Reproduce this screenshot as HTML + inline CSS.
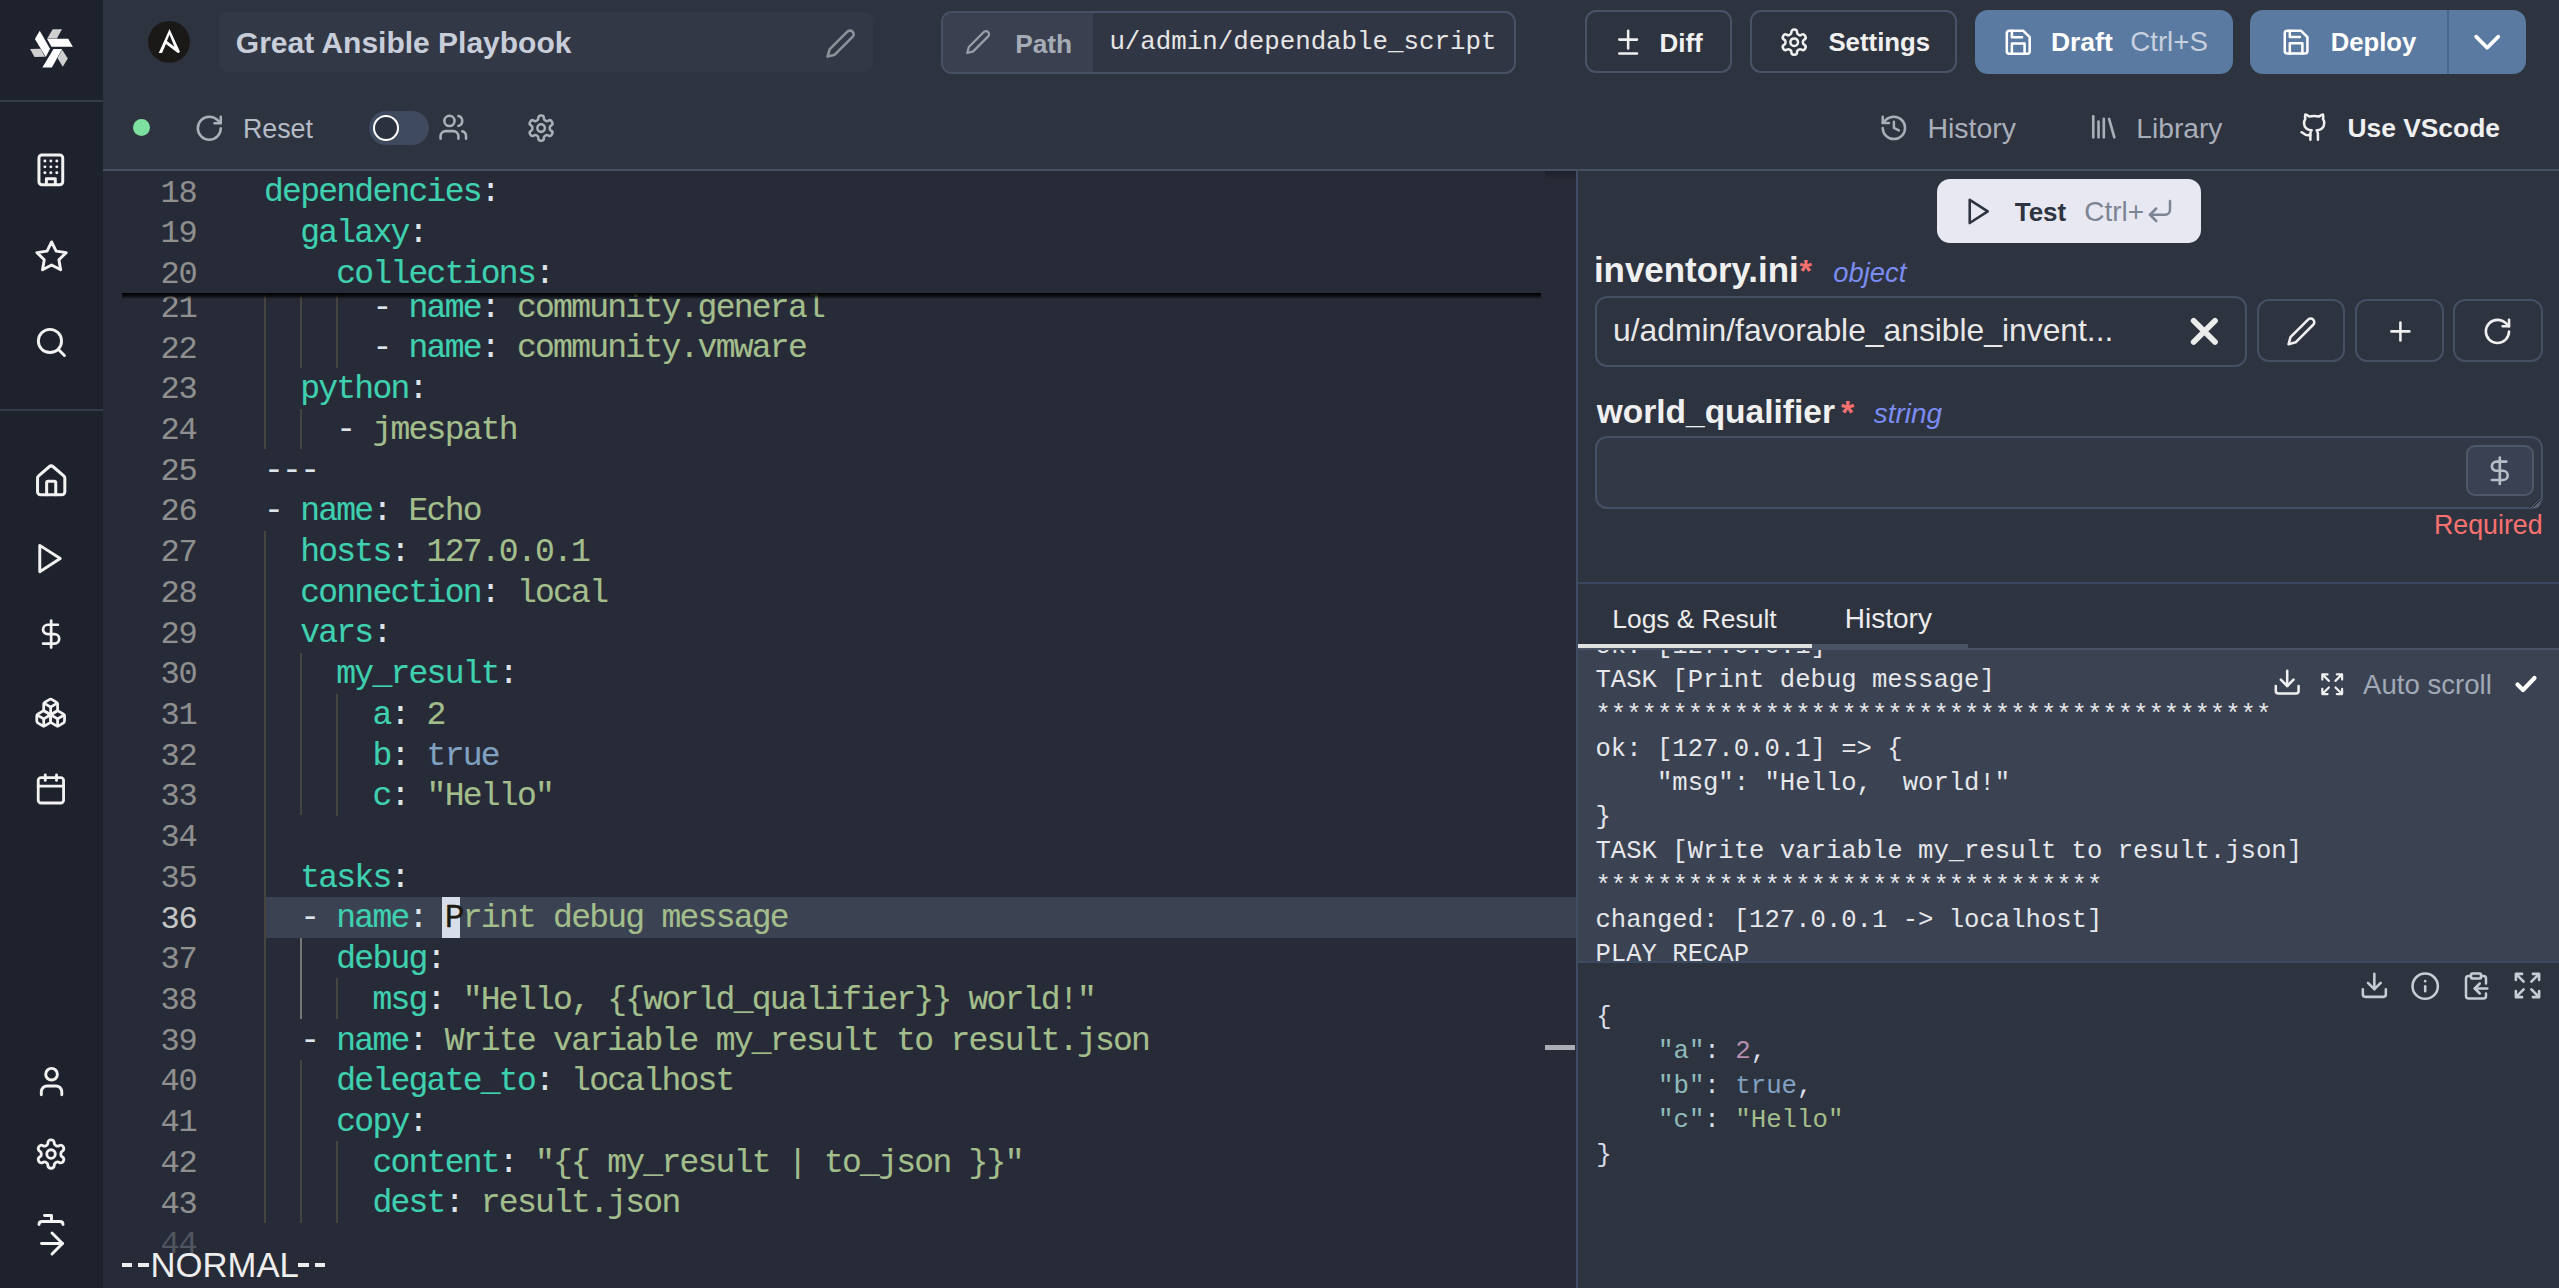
<!DOCTYPE html>
<html><head><meta charset="utf-8">
<style>
*{box-sizing:border-box;margin:0;padding:0}
html,body{width:2559px;height:1288px;overflow:hidden;background:#2e3340;font-family:"Liberation Sans",sans-serif;position:relative}
.a{position:absolute}
svg{position:absolute;fill:none;stroke-linecap:round;stroke-linejoin:round;overflow:visible}
.t{position:absolute;white-space:pre;line-height:1}
.ln{position:absolute;left:0;width:196.6px;text-align:right;font-family:"Liberation Mono",monospace;font-size:32px;line-height:40.71px;height:40.71px;color:#8f8f8f;letter-spacing:-1.14px;padding-top:2.6px;-webkit-text-stroke:0.1px currentColor}
.ln.act{color:#c6c6c6}
.ln.dim{color:#505560}
.cl{position:absolute;left:264px;font-family:"Liberation Mono",monospace;font-size:33px;line-height:40.71px;height:40.71px;white-space:pre;color:#d8dee9;letter-spacing:-1.74px;padding-top:2.4px;-webkit-text-stroke:0.15px currentColor}
.k{color:#3fd0b0}.s{color:#a3be8c}.p{color:#dfe3ea}.b{color:#81a1c1}
.cur{color:#1d1b12;-webkit-text-stroke:0.3px #1d1b12}
.g{position:absolute;width:2px;background:#45443f}
.ga{position:absolute;width:2px;background:#767674}
</style></head><body>
<div class="a" style="left:0;top:0;width:103px;height:1288px;background:#1e222d"></div>
<div class="a" style="left:0.0px;top:100.0px;width:103.0px;height:2.0px;background:#343c4c"></div>
<div class="a" style="left:0.0px;top:409.0px;width:103.0px;height:2.0px;background:#343c4c"></div>
<svg style="left:24px;top:22px;width:56px;height:52px" viewBox="0 0 1387 1288" stroke="none">
<polygon fill="#ffffff" points="390,215 645,660 540,870 270,420"/>
<polygon fill="#cfcfcf" points="150,670 410,665 520,860 260,870"/>
<polygon fill="#ffffff" points="570,415 1095,415 1210,615 680,615"/>
<polygon fill="#cfcfcf" points="710,180 940,180 815,410 575,410"/>
<polygon fill="#ffffff" points="730,670 945,670 690,1130 455,1130"/>
<polygon fill="#cfcfcf" points="945,690 1085,905 960,1110 830,890"/>
</svg>
<svg style="left:33.0px;top:152.3px;width:35.7px;height:35.7px;" viewBox="0 0 24 24" stroke="#f2f2f2" stroke-width="2"><rect width="16" height="20" x="4" y="2" rx="2" ry="2"/><path d="M9 22v-4h6v4"/><path d="M8 6h.01"/><path d="M16 6h.01"/><path d="M12 6h.01"/><path d="M12 10h.01"/><path d="M12 14h.01"/><path d="M16 10h.01"/><path d="M16 14h.01"/><path d="M8 10h.01"/><path d="M8 14h.01"/></svg>
<svg style="left:33.5px;top:238.5px;width:35.2px;height:35.2px;" viewBox="0 0 24 24" stroke="#f2f2f2" stroke-width="2"><polygon points="12 2 15.09 8.26 22 9.27 17 14.14 18.18 21.02 12 17.77 5.82 21.02 7 14.14 2 9.27 8.91 8.26 12 2"/></svg>
<svg style="left:34.1px;top:324.6px;width:34.8px;height:34.8px;" viewBox="0 0 24 24" stroke="#f2f2f2" stroke-width="2"><circle cx="11" cy="11" r="8"/><path d="m21 21-4.3-4.3"/></svg>
<svg style="left:33.0px;top:462.7px;width:36.4px;height:36.4px;" viewBox="0 0 24 24" stroke="#f2f2f2" stroke-width="2"><path d="M15 21v-8a1 1 0 0 0-1-1h-4a1 1 0 0 0-1 1v8"/><path d="M3 10a2 2 0 0 1 .709-1.528l7-5.999a2 2 0 0 1 2.582 0l7 5.999A2 2 0 0 1 21 10v9a2 2 0 0 1-2 2H5a2 2 0 0 1-2-2z"/></svg>
<svg style="left:31.4px;top:540.8px;width:35.1px;height:35.1px;" viewBox="0 0 24 24" stroke="#f2f2f2" stroke-width="2"><polygon points="6 3 20 12 6 21 6 3"/></svg>
<svg style="left:35.3px;top:618.3px;width:32.3px;height:32.3px;" viewBox="0 0 24 24" stroke="#f2f2f2" stroke-width="2"><line x1="12" x2="12" y1="2" y2="22"/><path d="M17 5H9.5a3.5 3.5 0 0 0 0 7h5a3.5 3.5 0 0 1 0 7H6"/></svg>
<svg style="left:34.1px;top:695.6px;width:33.3px;height:33.3px;" viewBox="0 0 24 24" stroke="#f2f2f2" stroke-width="2"><path d="M2.97 12.92A2 2 0 0 0 2 14.63v3.24a2 2 0 0 0 .97 1.71l3 1.8a2 2 0 0 0 2.06 0L12 19v-5.5l-5-3-4.03 2.42Z"/><path d="m7 16.5-4.74-2.85"/><path d="m7 16.5 5-3"/><path d="M7 16.5v5.17"/><path d="M12 13.5V19l3.97 2.38a2 2 0 0 0 2.06 0l3-1.8a2 2 0 0 0 .97-1.71v-3.24a2 2 0 0 0-.97-1.71L17 10.5l-5 3Z"/><path d="m17 16.5-5-3"/><path d="m17 16.5 4.74-2.85"/><path d="M17 16.5v5.17"/><path d="M7.97 4.42A2 2 0 0 0 7 6.13v4.37l5 3 5-3V6.13a2 2 0 0 0-.97-1.71l-3-1.8a2 2 0 0 0-2.06 0l-3 1.8Z"/><path d="M12 8 7.26 5.15"/><path d="m12 8 4.74-2.85"/><path d="M12 13.5V8"/></svg>
<svg style="left:34.2px;top:771.9px;width:33.8px;height:33.8px;" viewBox="0 0 24 24" stroke="#f2f2f2" stroke-width="2"><rect width="18" height="18" x="3" y="4" rx="2" ry="2"/><line x1="16" x2="16" y1="2" y2="6"/><line x1="8" x2="8" y1="2" y2="6"/><line x1="3" x2="21" y1="10" y2="10"/></svg>
<svg style="left:33.6px;top:1063.7px;width:35.1px;height:35.1px;" viewBox="0 0 24 24" stroke="#f2f2f2" stroke-width="2"><path d="M19 21v-2a4 4 0 0 0-4-4H9a4 4 0 0 0-4 4v2"/><circle cx="12" cy="7" r="4"/></svg>
<svg style="left:34.3px;top:1136.6px;width:34.1px;height:34.1px;" viewBox="0 0 24 24" stroke="#f2f2f2" stroke-width="2"><path d="M12.22 2h-.44a2 2 0 0 0-2 2v.18a2 2 0 0 1-1 1.73l-.43.25a2 2 0 0 1-2 0l-.15-.08a2 2 0 0 0-2.73.73l-.22.38a2 2 0 0 0 .73 2.73l.15.1a2 2 0 0 1 1 1.72v.51a2 2 0 0 1-1 1.74l-.15.09a2 2 0 0 0-.73 2.73l.22.38a2 2 0 0 0 2.73.73l.15-.08a2 2 0 0 1 2 0l.43.25a2 2 0 0 1 1 1.73V20a2 2 0 0 0 2 2h.44a2 2 0 0 0 2-2v-.18a2 2 0 0 1 1-1.73l.43-.25a2 2 0 0 1 2 0l.15.08a2 2 0 0 0 2.73-.73l.22-.39a2 2 0 0 0-.73-2.73l-.15-.08a2 2 0 0 1-1-1.74v-.5a2 2 0 0 1 1-1.74l.15-.09a2 2 0 0 0 .73-2.73l-.22-.38a2 2 0 0 0-2.73-.73l-.15.08a2 2 0 0 1-2 0l-.43-.25a2 2 0 0 1-1-1.73V4a2 2 0 0 0-2-2z"/><circle cx="12" cy="12" r="3"/></svg>
<svg style="left:34px;top:1208px;width:34px;height:52px" viewBox="0 0 34 52" stroke="#f4f4f4" stroke-width="2.9">
<path d="M10.5 7.5h7v6"/><path d="M5 16.5c0-2 1-3 3-3h18c2 0 3 1 3 3"/><path d="M7.5 35.5h21"/><path d="M18 25l10.5 10.5L18 46"/></svg>
<div class="a" style="left:103.0px;top:0.0px;width:2456.0px;height:169.0px;background:#2e3340"></div>
<div class="a" style="left:103.0px;top:169.0px;width:2456.0px;height:2.0px;background:#465063"></div>
<svg style="left:144px;top:18px;width:50px;height:48px" viewBox="0 0 1342 1288" stroke="none">
<circle cx="672" cy="642" r="562" fill="#1a1918"/>
<path fill="#ffffff" fill-rule="evenodd" d="M685 295 L960 895 Q965 945 900 935 L590 700 L485 940 L395 940 Z M685 440 L615 615 L815 770 Z"/></svg>
<div class="a" style="left:219.0px;top:12.0px;width:653.5px;height:60.0px;background:#333846;border-radius:9px"></div>
<div class="t" style="left:235.8px;top:28.2px;font-size:30px;color:#c8ced9;font-weight:bold;font-style:normal;font-family:'Liberation Sans';">Great Ansible Playbook</div>
<svg style="left:825.1px;top:28.2px;width:31.2px;height:31.2px;" viewBox="0 0 24 24" stroke="#8c919a" stroke-width="2"><path d="M17 3a2.85 2.83 0 1 1 4 4L7.5 20.5 2 22l1.5-5.5Z"/></svg>
<div class="a" style="left:941.0px;top:10.5px;width:574.5px;height:63.0px;border:2px solid #485163;border-radius:11px;background:#313645;overflow:hidden"></div>
<div class="a" style="left:943.0px;top:12.5px;width:150.0px;height:59.0px;background:#3a404f;border-radius:9px 0 0 9px"></div>
<svg style="left:964.5px;top:28.7px;width:26.2px;height:26.2px;" viewBox="0 0 24 24" stroke="#9aa0aa" stroke-width="2"><path d="M17 3a2.85 2.83 0 1 1 4 4L7.5 20.5 2 22l1.5-5.5Z"/></svg>
<div class="t" style="left:1015.2px;top:30.7px;font-size:26.3px;color:#a6acb6;font-weight:bold;font-style:normal;font-family:'Liberation Sans';">Path</div>
<div class="t" style="left:1109.4px;top:30.4px;font-size:25.8px;color:#e6e6e6;font-weight:normal;font-style:normal;font-family:'Liberation Mono';">u/admin/dependable_script</div>
<div class="a" style="left:1585.4px;top:10.3px;width:146.3px;height:63.2px;border:2px solid #4a5366;border-radius:11px"></div>
<svg style="left:1612.7px;top:26.9px;width:30.3px;height:30.3px;" viewBox="0 0 24 24" stroke="#f0f0f0" stroke-width="2"><path d="M12 3v14"/><path d="M5 10h14"/><path d="M5 21h14"/></svg>
<div class="t" style="left:1659.4px;top:29.6px;font-size:26px;color:#f0f0f0;font-weight:bold;font-style:normal;font-family:'Liberation Sans';">Diff</div>
<div class="a" style="left:1749.5px;top:10.3px;width:207.9px;height:63.2px;border:2px solid #4a5366;border-radius:11px"></div>
<svg style="left:1778.7px;top:26.7px;width:30.4px;height:30.4px;" viewBox="0 0 24 24" stroke="#f0f0f0" stroke-width="2"><path d="M12.22 2h-.44a2 2 0 0 0-2 2v.18a2 2 0 0 1-1 1.73l-.43.25a2 2 0 0 1-2 0l-.15-.08a2 2 0 0 0-2.73.73l-.22.38a2 2 0 0 0 .73 2.73l.15.1a2 2 0 0 1 1 1.72v.51a2 2 0 0 1-1 1.74l-.15.09a2 2 0 0 0-.73 2.73l.22.38a2 2 0 0 0 2.73.73l.15-.08a2 2 0 0 1 2 0l.43.25a2 2 0 0 1 1 1.73V20a2 2 0 0 0 2 2h.44a2 2 0 0 0 2-2v-.18a2 2 0 0 1 1-1.73l.43-.25a2 2 0 0 1 2 0l.15.08a2 2 0 0 0 2.73-.73l.22-.39a2 2 0 0 0-.73-2.73l-.15-.08a2 2 0 0 1-1-1.74v-.5a2 2 0 0 1 1-1.74l.15-.09a2 2 0 0 0 .73-2.73l-.22-.38a2 2 0 0 0-2.73-.73l-.15.08a2 2 0 0 1-2 0l-.43-.25a2 2 0 0 1-1-1.73V4a2 2 0 0 0-2-2z"/><circle cx="12" cy="12" r="3"/></svg>
<div class="t" style="left:1828.4px;top:29.8px;font-size:25.8px;color:#f0f0f0;font-weight:bold;font-style:normal;font-family:'Liberation Sans';">Settings</div>
<div class="a" style="left:1975.0px;top:10.0px;width:257.7px;height:63.7px;background:#5b7aa1;border-radius:13px"></div>
<svg style="left:2002.5px;top:26.8px;width:30.5px;height:30.5px;" viewBox="0 0 24 24" stroke="#ffffff" stroke-width="2"><path d="M19 21H5a2 2 0 0 1-2-2V5a2 2 0 0 1 2-2h11l5 5v11a2 2 0 0 1-2 2z"/><polyline points="17 21 17 13 7 13 7 21"/><polyline points="7 3 7 8 15 8"/></svg>
<div class="t" style="left:2050.9px;top:29.2px;font-size:26.5px;color:#ffffff;font-weight:bold;font-style:normal;font-family:'Liberation Sans';">Draft</div>
<div class="t" style="left:2130.2px;top:28.2px;font-size:27.7px;color:#c6d0de;font-weight:normal;font-style:normal;font-family:'Liberation Sans';">Ctrl+S</div>
<div class="a" style="left:2250.3px;top:10.0px;width:275.7px;height:63.7px;background:#5b7aa1;border-radius:13px"></div>
<div class="a" style="left:2447.0px;top:10.0px;width:2.0px;height:63.7px;background:#4a6690"></div>
<svg style="left:2281.2px;top:26.8px;width:30.2px;height:30.2px;" viewBox="0 0 24 24" stroke="#ffffff" stroke-width="2"><path d="M19 21H5a2 2 0 0 1-2-2V5a2 2 0 0 1 2-2h11l5 5v11a2 2 0 0 1-2 2z"/><polyline points="17 21 17 13 7 13 7 21"/><polyline points="7 3 7 8 15 8"/></svg>
<div class="t" style="left:2330.7px;top:29.8px;font-size:25.7px;color:#ffffff;font-weight:bold;font-style:normal;font-family:'Liberation Sans';">Deploy</div>
<svg style="left:2465.3px;top:20.2px;width:44.4px;height:44.4px;" viewBox="0 0 24 24" stroke="#ffffff" stroke-width="2"><path d="m6 9 6 6 6-6"/></svg>
<div class="a" style="left:133px;top:119px;width:17px;height:17px;border-radius:50%;background:#7ee0a0"></div>
<svg style="left:194.4px;top:112.5px;width:30.6px;height:30.6px;" viewBox="0 0 24 24" stroke="#aab0ba" stroke-width="2"><path d="M21 12a9 9 0 1 1-9-9c2.52 0 4.93 1 6.74 2.74L21 8"/><path d="M21 3v5h-5"/></svg>
<div class="t" style="left:242.9px;top:115.6px;font-size:26.8px;color:#b6bcc6;font-weight:normal;font-style:normal;font-family:'Liberation Sans';">Reset</div>
<div class="a" style="left:369.0px;top:111.0px;width:60.0px;height:34.0px;background:#404a5e;border-radius:17px"></div>
<div class="a" style="left:373px;top:115px;width:26px;height:26px;border-radius:50%;border:2.5px solid #ffffff;background:#2c3140"></div>
<svg style="left:437.7px;top:112.4px;width:30.6px;height:30.6px;" viewBox="0 0 24 24" stroke="#aab0ba" stroke-width="2"><path d="M16 21v-2a4 4 0 0 0-4-4H6a4 4 0 0 0-4 4v2"/><circle cx="9" cy="7" r="4"/><path d="M22 21v-2a4 4 0 0 0-3-3.87"/><path d="M16 3.13a4 4 0 0 1 0 7.75"/></svg>
<svg style="left:526.0px;top:112.7px;width:30.2px;height:30.2px;" viewBox="0 0 24 24" stroke="#aab0ba" stroke-width="2"><path d="M12.22 2h-.44a2 2 0 0 0-2 2v.18a2 2 0 0 1-1 1.73l-.43.25a2 2 0 0 1-2 0l-.15-.08a2 2 0 0 0-2.73.73l-.22.38a2 2 0 0 0 .73 2.73l.15.1a2 2 0 0 1 1 1.72v.51a2 2 0 0 1-1 1.74l-.15.09a2 2 0 0 0-.73 2.73l.22.38a2 2 0 0 0 2.73.73l.15-.08a2 2 0 0 1 2 0l.43.25a2 2 0 0 1 1 1.73V20a2 2 0 0 0 2 2h.44a2 2 0 0 0 2-2v-.18a2 2 0 0 1 1-1.73l.43-.25a2 2 0 0 1 2 0l.15.08a2 2 0 0 0 2.73-.73l.22-.39a2 2 0 0 0-.73-2.73l-.15-.08a2 2 0 0 1-1-1.74v-.5a2 2 0 0 1 1-1.74l.15-.09a2 2 0 0 0 .73-2.73l-.22-.38a2 2 0 0 0-2.73-.73l-.15.08a2 2 0 0 1-2 0l-.43-.25a2 2 0 0 1-1-1.73V4a2 2 0 0 0-2-2z"/><circle cx="12" cy="12" r="3"/></svg>
<svg style="left:1878.8px;top:113.0px;width:29.8px;height:29.8px;" viewBox="0 0 24 24" stroke="#a9afb9" stroke-width="2"><path d="M3 12a9 9 0 1 0 9-9 9.75 9.75 0 0 0-6.74 2.74L3 8"/><path d="M3 3v5h5"/><path d="M12 7v5l4 2"/></svg>
<div class="t" style="left:1927.4px;top:114.2px;font-size:28.5px;color:#a9afb9;font-weight:normal;font-style:normal;font-family:'Liberation Sans';">History</div>
<svg style="left:2087.7px;top:111.0px;width:31.6px;height:31.6px;" viewBox="0 0 24 24" stroke="#a9afb9" stroke-width="2"><path d="m16 6 4 14"/><path d="M12 6v14"/><path d="M8 8v12"/><path d="M4 4v16"/></svg>
<div class="t" style="left:2136.3px;top:114.4px;font-size:28.2px;color:#a9afb9;font-weight:normal;font-style:normal;font-family:'Liberation Sans';">Library</div>
<svg style="left:2298.5px;top:112.3px;width:30.3px;height:30.3px;" viewBox="0 0 24 24" stroke="#f0f0f0" stroke-width="2"><path d="M15 22v-4a4.8 4.8 0 0 0-1-3.5c3 0 6-2 6-5.5.08-1.25-.27-2.48-1-3.5.28-1.15.28-2.35 0-3.5 0 0-1 0-3 1.5-2.64-.5-5.36-.5-8 0C6 2 5 2 5 2c-.3 1.15-.3 2.35 0 3.5A5.403 5.403 0 0 0 4 9c0 3.5 3 5.5 6 5.5-.39.49-.68 1.05-.85 1.65-.17.6-.22 1.23-.15 1.85v4"/><path d="M9 18c-4.51 2-5-2-7-2"/></svg>
<div class="t" style="left:2347.4px;top:115.0px;font-size:26.4px;color:#f0f0f0;font-weight:bold;font-style:normal;font-family:'Liberation Sans';">Use VScode</div>
<div class="a" style="left:103px;top:171px;width:1474px;height:1117px;background:#262b37;overflow:hidden"><div style="position:absolute;left:-103px;top:-171px;width:2559px;height:1288px">
<div class="a" style="left:266.0px;top:897.0px;width:1310.0px;height:40.7px;background:#3b4252"></div>
<div class="a" style="left:442.2px;top:897.0px;width:18.0px;height:40.7px;background:#d8dee9"></div>
<div class="g" style="left:264.0px;top:293.0px;height:156.2px"></div><div class="g" style="left:300.1px;top:293.0px;height:74.8px"></div><div class="g" style="left:336.2px;top:293.0px;height:74.8px"></div><div class="g" style="left:300.1px;top:408.5px;height:40.7px"></div><div class="g" style="left:264.0px;top:530.6px;height:692.1px"></div><div class="g" style="left:300.1px;top:652.7px;height:162.8px"></div><div class="g" style="left:336.2px;top:693.5px;height:122.1px"></div><div class="ga" style="left:300.1px;top:937.7px;height:81.4px"></div><div class="g" style="left:336.2px;top:978.4px;height:40.7px"></div><div class="g" style="left:300.1px;top:1059.8px;height:162.8px"></div><div class="g" style="left:336.2px;top:1141.3px;height:81.4px"></div>
<div class="ln" style="top:286.35px">21</div><div class="cl" style="top:286.35px">      <span class="p">- </span><span class="k">name</span><span class="p">: </span><span class="s">community.general</span></div><div class="ln" style="top:327.06px">22</div><div class="cl" style="top:327.06px">      <span class="p">- </span><span class="k">name</span><span class="p">: </span><span class="s">community.vmware</span></div><div class="ln" style="top:367.77px">23</div><div class="cl" style="top:367.77px">  <span class="k">python</span><span class="p">:</span></div><div class="ln" style="top:408.48px">24</div><div class="cl" style="top:408.48px">    <span class="p">- </span><span class="s">jmespath</span></div><div class="ln" style="top:449.19px">25</div><div class="cl" style="top:449.19px"><span class="p">---</span></div><div class="ln" style="top:489.90px">26</div><div class="cl" style="top:489.90px"><span class="p">- </span><span class="k">name</span><span class="p">: </span><span class="s">Echo</span></div><div class="ln" style="top:530.61px">27</div><div class="cl" style="top:530.61px">  <span class="k">hosts</span><span class="p">: </span><span class="s">127.0.0.1</span></div><div class="ln" style="top:571.32px">28</div><div class="cl" style="top:571.32px">  <span class="k">connection</span><span class="p">: </span><span class="s">local</span></div><div class="ln" style="top:612.03px">29</div><div class="cl" style="top:612.03px">  <span class="k">vars</span><span class="p">:</span></div><div class="ln" style="top:652.74px">30</div><div class="cl" style="top:652.74px">    <span class="k">my_result</span><span class="p">:</span></div><div class="ln" style="top:693.45px">31</div><div class="cl" style="top:693.45px">      <span class="k">a</span><span class="p">: </span><span class="s">2</span></div><div class="ln" style="top:734.16px">32</div><div class="cl" style="top:734.16px">      <span class="k">b</span><span class="p">: </span><span class="b">true</span></div><div class="ln" style="top:774.87px">33</div><div class="cl" style="top:774.87px">      <span class="k">c</span><span class="p">: </span><span class="s">&quot;Hello&quot;</span></div><div class="ln" style="top:815.58px">34</div><div class="cl" style="top:815.58px"></div><div class="ln" style="top:856.29px">35</div><div class="cl" style="top:856.29px">  <span class="k">tasks</span><span class="p">:</span></div><div class="ln act" style="top:897.00px">36</div><div class="cl" style="top:897.00px">  <span class="p">- </span><span class="k">name</span><span class="p">: </span><span class="cur">P</span><span class="s">rint debug message</span></div><div class="ln" style="top:937.71px">37</div><div class="cl" style="top:937.71px">    <span class="k">debug</span><span class="p">:</span></div><div class="ln" style="top:978.42px">38</div><div class="cl" style="top:978.42px">      <span class="k">msg</span><span class="p">: </span><span class="s">&quot;Hello, {{world_qualifier}} world!&quot;</span></div><div class="ln" style="top:1019.13px">39</div><div class="cl" style="top:1019.13px">  <span class="p">- </span><span class="k">name</span><span class="p">: </span><span class="s">Write variable my_result to result.json</span></div><div class="ln" style="top:1059.84px">40</div><div class="cl" style="top:1059.84px">    <span class="k">delegate_to</span><span class="p">: </span><span class="s">localhost</span></div><div class="ln" style="top:1100.55px">41</div><div class="cl" style="top:1100.55px">    <span class="k">copy</span><span class="p">:</span></div><div class="ln" style="top:1141.26px">42</div><div class="cl" style="top:1141.26px">      <span class="k">content</span><span class="p">: </span><span class="s">&quot;{{ my_result | to_json }}&quot;</span></div><div class="ln" style="top:1181.97px">43</div><div class="cl" style="top:1181.97px">      <span class="k">dest</span><span class="p">: </span><span class="s">result.json</span></div><div class="ln dim" style="top:1222.68px">44</div><div class="cl" style="top:1222.68px"></div>
<div class="a" style="left:103.0px;top:171.0px;width:1438.0px;height:121.5px;background:#262b37"></div>
<div class="a" style="left:122.0px;top:292.5px;width:1419.0px;height:6.0px;background:linear-gradient(rgba(0,0,0,1),rgba(0,0,0,.75) 45%,rgba(0,0,0,0))"></div>
<div class="ln" style="top:171.00px">18</div><div class="cl" style="top:171.00px"><span class="k">dependencies</span><span class="p">:</span></div><div class="ln" style="top:211.71px">19</div><div class="cl" style="top:211.71px">  <span class="k">galaxy</span><span class="p">:</span></div><div class="ln" style="top:252.42px">20</div><div class="cl" style="top:252.42px">    <span class="k">collections</span><span class="p">:</span></div>
<div class="a" style="left:1545.0px;top:1045.3px;width:30.0px;height:4.7px;background:#a9adb5"></div>
<div class="a" style="left:1545.0px;top:171.0px;width:31.0px;height:9.0px;background:linear-gradient(#1b1f28,#262b37)"></div>
</div></div>
<div class="t" style="left:150.5px;top:1248.0px;font-size:34.7px;color:#eeeeee;font-weight:normal;font-style:normal;font-family:'Liberation Sans';">NORMAL</div>
<div class="a" style="left:121.7px;top:1263.3px;width:10.5px;height:3.5px;background:#eeeeee"></div>
<div class="a" style="left:138.1px;top:1263.3px;width:10.5px;height:3.5px;background:#eeeeee"></div>
<div class="a" style="left:298.0px;top:1263.3px;width:10.5px;height:3.5px;background:#eeeeee"></div>
<div class="a" style="left:314.5px;top:1263.3px;width:10.5px;height:3.5px;background:#eeeeee"></div>
<div class="a" style="left:1578.0px;top:171.0px;width:981.0px;height:1117.0px;background:#2e3340"></div>
<div class="a" style="left:1576.0px;top:171.0px;width:2.0px;height:1117.0px;background:#3f4c63"></div>
<div class="a" style="left:1937.0px;top:179.0px;width:263.8px;height:64.0px;background:#e8e8f2;border-radius:13px"></div>
<svg style="left:1962.3px;top:196.2px;width:30.9px;height:30.9px;" viewBox="0 0 24 24" stroke="#2e3440" stroke-width="2"><polygon points="6 3 20 12 6 21 6 3"/></svg>
<div class="t" style="left:2014.7px;top:199.2px;font-size:26px;color:#2e3440;font-weight:bold;font-style:normal;font-family:'Liberation Sans';">Test</div>
<div class="t" style="left:2084.3px;top:198.1px;font-size:28px;color:#7d8494;font-weight:normal;font-style:normal;font-family:'Liberation Sans';">Ctrl+</div>
<svg style="left:2145.0px;top:196.2px;width:30.0px;height:30.0px;" viewBox="0 0 24 24" stroke="#7d8494" stroke-width="2"><polyline points="9 10 4 15 9 20"/><path d="M20 4v7a4 4 0 0 1-4 4H4"/></svg>
<div class="t" style="left:1593.9px;top:253.0px;font-size:34.9px;color:#f0f0f0;font-weight:bold;font-style:normal;font-family:'Liberation Sans';">inventory.ini</div>
<div class="t" style="left:1799.5px;top:254.9px;font-size:32px;color:#f87171;font-weight:bold;font-style:normal;font-family:'Liberation Sans';">*</div>
<div class="t" style="left:1833.2px;top:259.3px;font-size:27.4px;color:#7b8cf3;font-weight:normal;font-style:italic;font-family:'Liberation Sans';">object</div>
<div class="a" style="left:1595.0px;top:295.5px;width:652.4px;height:71.9px;border:2px solid #465063;border-radius:12px"></div>
<div class="t" style="left:1613.1px;top:315.1px;font-size:31.8px;color:#e8e8e8;font-weight:normal;font-style:normal;font-family:'Liberation Sans';">u/admin/favorable_ansible_invent...</div>
<svg style="left:2182.9px;top:309.9px;width:42.7px;height:42.7px;" viewBox="0 0 24 24" stroke="#ececec" stroke-width="3.2"><path d="M18 6 6 18"/><path d="m6 6 12 12"/></svg>
<div class="a" style="left:2257.3px;top:299.3px;width:88.1px;height:63.2px;border:2px solid #465063;border-radius:12px"></div>
<div class="a" style="left:2355.2px;top:299.3px;width:89.2px;height:63.2px;border:2px solid #465063;border-radius:12px"></div>
<div class="a" style="left:2453.3px;top:299.3px;width:89.3px;height:63.2px;border:2px solid #465063;border-radius:12px"></div>
<svg style="left:2285.7px;top:315.5px;width:30.8px;height:30.8px;" viewBox="0 0 24 24" stroke="#f0f0f0" stroke-width="2"><path d="M17 3a2.85 2.83 0 1 1 4 4L7.5 20.5 2 22l1.5-5.5Z"/></svg>
<svg style="left:2384.5px;top:315.6px;width:30.8px;height:30.8px;" viewBox="0 0 24 24" stroke="#f0f0f0" stroke-width="2"><path d="M5 12h14"/><path d="M12 5v14"/></svg>
<svg style="left:2482.4px;top:315.6px;width:30.9px;height:30.9px;" viewBox="0 0 24 24" stroke="#f0f0f0" stroke-width="2"><path d="M21 12a9 9 0 1 1-9-9c2.52 0 4.93 1 6.74 2.74L21 8"/><path d="M21 3v5h-5"/></svg>
<div class="t" style="left:1596.7px;top:395.1px;font-size:33.5px;color:#f0f0f0;font-weight:bold;font-style:normal;font-family:'Liberation Sans';">world_qualifier</div>
<div class="t" style="left:1841.0px;top:395.2px;font-size:34px;color:#f87171;font-weight:bold;font-style:normal;font-family:'Liberation Sans';">*</div>
<div class="t" style="left:1873.8px;top:399.9px;font-size:27.9px;color:#7b8cf3;font-weight:normal;font-style:italic;font-family:'Liberation Sans';">string</div>
<div class="a" style="left:1595.0px;top:436.3px;width:947.5px;height:72.5px;border:2px solid #465063;border-radius:12px;background:#323846"></div>
<div class="a" style="left:2466.4px;top:445.2px;width:67.7px;height:50.9px;border:2px solid #4f5868;border-radius:9px;background:#3a4152"></div>
<svg style="left:2484.2px;top:454.7px;width:31.6px;height:31.6px;" viewBox="0 0 24 24" stroke="#b8bec8" stroke-width="2"><line x1="12" x2="12" y1="2" y2="22"/><path d="M17 5H9.5a3.5 3.5 0 0 0 0 7h5a3.5 3.5 0 0 1 0 7H6"/></svg>
<svg style="left:2528px;top:495px;width:14px;height:14px" viewBox="0 0 14 14" stroke-linecap="butt" stroke-width="0.9"><path d="M2 12.5L11 3.5" stroke="#151820"/><path d="M5 12.5L11.5 6" stroke="#151820"/><path d="M3 12.8L11.5 4.3" stroke="#6b7280"/><path d="M6 12.8L11.8 7" stroke="#8a90a0"/><path d="M9 12.3L11.3 10" stroke="#8a90a0"/></svg>
<div class="t" style="left:2433.9px;top:512.2px;font-size:26.8px;color:#f87171;font-weight:normal;font-style:normal;font-family:'Liberation Sans';">Required</div>
<div class="a" style="left:1578.0px;top:582.0px;width:981.0px;height:2.0px;background:#3b475c"></div>
<div class="a" style="left:1578.0px;top:584.0px;width:981.0px;height:66.0px;background:#2e3340"></div>
<div class="t" style="left:1612.3px;top:606.2px;font-size:26.4px;color:#ececec;font-weight:normal;font-style:normal;font-family:'Liberation Sans';">Logs &amp; Result</div>
<div class="t" style="left:1844.8px;top:604.8px;font-size:28px;color:#ececec;font-weight:normal;font-style:normal;font-family:'Liberation Sans';">History</div>
<div class="a" style="left:1578.0px;top:644.0px;width:234.0px;height:4.0px;background:#e0e0e0"></div>
<div class="a" style="left:1812.0px;top:644.0px;width:156.0px;height:4.0px;background:#4a5364"></div>
<div class="a" style="left:1578.0px;top:648.0px;width:981.0px;height:2.0px;background:#485264"></div>
<div class="a" style="left:1578.0px;top:650.0px;width:981.0px;height:311.0px;background:#3b4252;overflow:hidden"></div>
<div class="a" style="left:1578px;top:650px;width:981px;height:311px;overflow:hidden"><div style="position:absolute;left:-1578px;top:-650px;width:2559px;height:1288px">
<div class="t" style="left:1595.5px;top:634.2px;font-size:25.6px;color:#e5e7eb;font-weight:normal;font-style:normal;font-family:'Liberation Mono';">ok: [127.0.0.1]</div>
<div class="t" style="left:1595.5px;top:668.4px;font-size:25.6px;color:#e5e7eb;font-weight:normal;font-style:normal;font-family:'Liberation Mono';">TASK [Print debug message]</div>
<div class="t" style="left:1595.5px;top:702.6px;font-size:25.6px;color:#e5e7eb;font-weight:normal;font-style:normal;font-family:'Liberation Mono';">********************************************</div>
<div class="t" style="left:1595.5px;top:736.8px;font-size:25.6px;color:#e5e7eb;font-weight:normal;font-style:normal;font-family:'Liberation Mono';">ok: [127.0.0.1] =&gt; {</div>
<div class="t" style="left:1595.5px;top:771.0px;font-size:25.6px;color:#e5e7eb;font-weight:normal;font-style:normal;font-family:'Liberation Mono';">    &quot;msg&quot;: &quot;Hello,  world!&quot;</div>
<div class="t" style="left:1595.5px;top:805.2px;font-size:25.6px;color:#e5e7eb;font-weight:normal;font-style:normal;font-family:'Liberation Mono';">}</div>
<div class="t" style="left:1595.5px;top:839.4px;font-size:25.6px;color:#e5e7eb;font-weight:normal;font-style:normal;font-family:'Liberation Mono';">TASK [Write variable my_result to result.json]</div>
<div class="t" style="left:1595.5px;top:873.6px;font-size:25.6px;color:#e5e7eb;font-weight:normal;font-style:normal;font-family:'Liberation Mono';">*********************************</div>
<div class="t" style="left:1595.5px;top:907.8px;font-size:25.6px;color:#e5e7eb;font-weight:normal;font-style:normal;font-family:'Liberation Mono';">changed: [127.0.0.1 -&gt; localhost]</div>
<div class="t" style="left:1595.5px;top:942.0px;font-size:25.6px;color:#e5e7eb;font-weight:normal;font-style:normal;font-family:'Liberation Mono';">PLAY RECAP</div>
</div></div>
<div class="a" style="left:2270.0px;top:660.0px;width:289.0px;height:48.0px;background:#3b4252"></div>
<svg style="left:2271.7px;top:666.8px;width:30.4px;height:30.4px;" viewBox="0 0 24 24" stroke="#f0f0f0" stroke-width="2"><path d="M21 15v4a2 2 0 0 1-2 2H5a2 2 0 0 1-2-2v-4"/><polyline points="7 10 12 15 17 10"/><line x1="12" x2="12" y1="15" y2="3"/></svg>
<svg style="left:2318.8px;top:670.8px;width:26.4px;height:26.4px;" viewBox="0 0 24 24" stroke="#f0f0f0" stroke-width="2"><path d="m21 21-6-6m6 6v-4.8m0 4.8h-4.8"/><path d="M3 16.2V21m0 0h4.8M3 21l6-6"/><path d="M21 7.8V3m0 0h-4.8M21 3l-6 6"/><path d="M3 7.8V3m0 0h4.8M3 3l6 6"/></svg>
<div class="t" style="left:2363.0px;top:670.6px;font-size:27.6px;color:#a1a9b6;font-weight:normal;font-style:normal;font-family:'Liberation Sans';">Auto scroll</div>
<svg style="left:2514px;top:674px;width:24px;height:20px" viewBox="0 0 24 20" stroke="#ffffff" stroke-width="4.2"><path d="M3.5 10.5l5.5 5.5L20.5 4"/></svg>
<div class="a" style="left:1578.0px;top:961.0px;width:981.0px;height:2.0px;background:#3b4a60"></div>
<svg style="left:2358.8px;top:970.4px;width:30.7px;height:30.7px;" viewBox="0 0 24 24" stroke="#c8ccd4" stroke-width="2"><path d="M21 15v4a2 2 0 0 1-2 2H5a2 2 0 0 1-2-2v-4"/><polyline points="7 10 12 15 17 10"/><line x1="12" x2="12" y1="15" y2="3"/></svg>
<svg style="left:2409.7px;top:970.7px;width:30.4px;height:30.4px;" viewBox="0 0 24 24" stroke="#c8ccd4" stroke-width="2"><circle cx="12" cy="12" r="10"/><path d="M12 16v-4"/><path d="M12 8h.01"/></svg>
<svg style="left:2461.3px;top:970.8px;width:30.0px;height:30.0px;" viewBox="0 0 24 24" stroke="#c8ccd4" stroke-width="2"><rect width="8" height="4" x="8" y="2" rx="1" ry="1"/><path d="M8 4H6a2 2 0 0 0-2 2v14a2 2 0 0 0 2 2h12a2 2 0 0 0 2-2v-2"/><path d="M16 4h2a2 2 0 0 1 2 2v4"/><path d="M21 14H11"/><path d="m15 10-4 4 4 4"/></svg>
<svg style="left:2512.4px;top:970.4px;width:31.0px;height:31.0px;" viewBox="0 0 24 24" stroke="#c8ccd4" stroke-width="2"><path d="m21 21-6-6m6 6v-4.8m0 4.8h-4.8"/><path d="M3 16.2V21m0 0h4.8M3 21l6-6"/><path d="M21 7.8V3m0 0h-4.8M21 3l-6 6"/><path d="M3 7.8V3m0 0h4.8M3 3l6 6"/></svg>
<div class="t" style="left:1596.2px;top:1004.8px;font-size:25.75px;font-family:'Liberation Mono'"><span style="color:#d8dee9">{</span></div>
<div class="t" style="left:1596.2px;top:1039.3px;font-size:25.75px;font-family:'Liberation Mono'"><span style="color:#d8dee9">    </span><span style="color:#8fbcbb">&quot;a&quot;</span><span style="color:#d8dee9">: </span><span style="color:#b48ead">2</span><span style="color:#d8dee9">,</span></div>
<div class="t" style="left:1596.2px;top:1073.7px;font-size:25.75px;font-family:'Liberation Mono'"><span style="color:#d8dee9">    </span><span style="color:#8fbcbb">&quot;b&quot;</span><span style="color:#d8dee9">: </span><span style="color:#81a1c1">true</span><span style="color:#d8dee9">,</span></div>
<div class="t" style="left:1596.2px;top:1108.3px;font-size:25.75px;font-family:'Liberation Mono'"><span style="color:#d8dee9">    </span><span style="color:#8fbcbb">&quot;c&quot;</span><span style="color:#d8dee9">: </span><span style="color:#a3be8c">&quot;Hello&quot;</span></div>
<div class="t" style="left:1596.2px;top:1142.8px;font-size:25.75px;font-family:'Liberation Mono'"><span style="color:#d8dee9">}</span></div>
</body></html>
